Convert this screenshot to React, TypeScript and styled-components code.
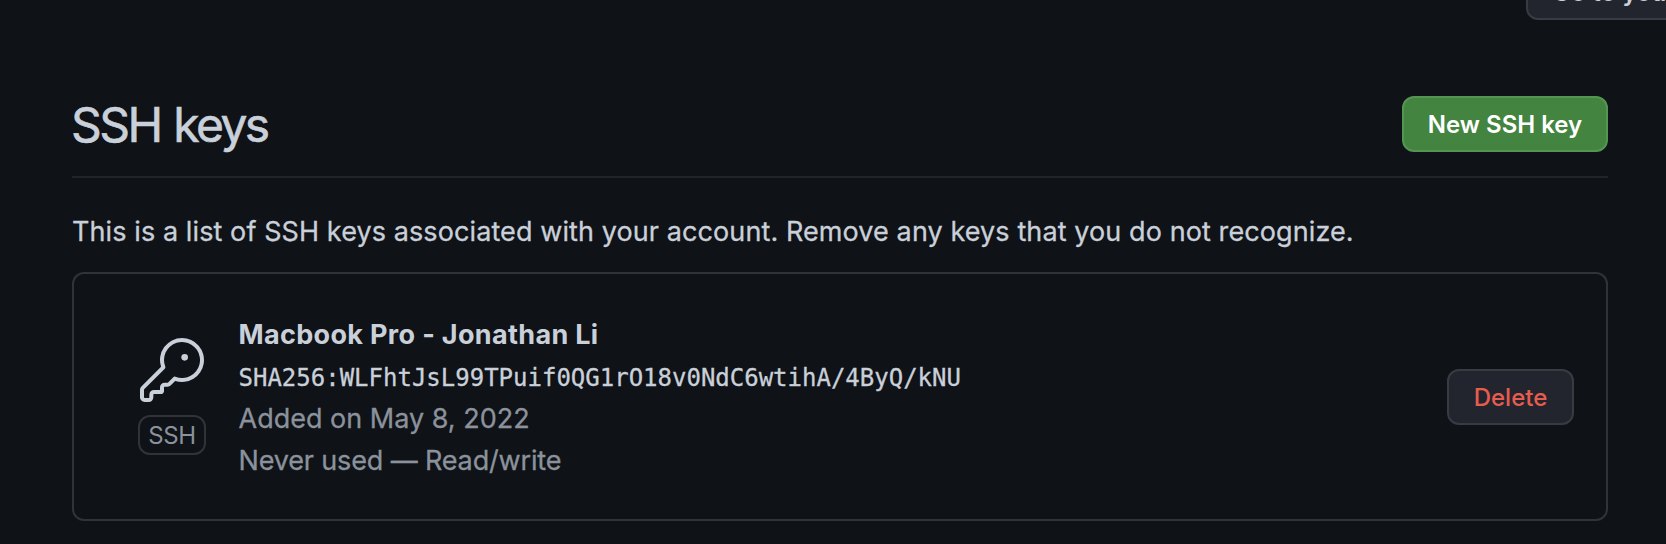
import styled, { createGlobalStyle } from 'styled-components';

const Global = createGlobalStyle`
  *, *::before, *::after { box-sizing: border-box; }
  html, body { margin: 0; background: #0f1217; overflow: hidden; }
`;

const Page = styled.main`
  height: 544px;
  overflow: hidden;
  padding: 0 58px 0 72px;
  background: #0f1217;
  color: #c9d0d9;
  font-family: Inter, 'Noto Sans', sans-serif;
  font-size: 27px;
  font-weight: 400;
  line-height: 42px;
`;

const TopBar = styled.div`
  display: flex;
  margin-top: -36px;
  padding-left: 1454px;
  margin-bottom: 76px;
`;

const Button = styled.button<{ $variant?: 'primary' | 'danger'; $width: number; $spacing?: number }>`
  flex: none;
  width: ${(p) => p.$width}px;
  height: 56px;
  padding: 2px 0 0;
  border: 2px solid ${(p) => (p.$variant === 'primary' ? '#559552' : '#383b42')};
  border-radius: 12px;
  background: ${(p) => (p.$variant === 'primary' ? '#438440' : '#22252d')};
  color: ${(p) => (p.$variant === 'primary' ? '#ffffff' : p.$variant === 'danger' ? '#e85c50' : '#c9d0d9')};
  font-family: inherit;
  font-size: 24px;
  font-weight: ${(p) => (p.$variant === 'danger' ? 500 : 600)};
  line-height: 40px;
  letter-spacing: ${(p) => p.$spacing ?? 0}px;
  white-space: nowrap;
`;

const Subhead = styled.header`
  display: flex;
  align-items: flex-start;
  justify-content: space-between;
  height: 82px;
  border-bottom: 2px solid #212428;
`;

const Title = styled.h2`
  margin: 0 0 0 -1px;
  font-size: 48px;
  font-weight: 400;
  line-height: 58px;
  letter-spacing: -2.6px;
  word-spacing: 2px;
  -webkit-text-stroke: 0.6px currentColor;
`;

const Description = styled.p`
  margin: 33px 0 19px;
  letter-spacing: 0.095px;
  white-space: nowrap;
  -webkit-text-stroke: 0.3px currentColor;
`;

const Card = styled.section`
  display: flex;
  align-items: center;
  height: 249px;
  padding: 0 32px 0 64px;
  border: 2px solid #303338;
  border-radius: 12px;
`;

const KeyBadge = styled.div`
  display: flex;
  flex-direction: column;
  align-items: center;
  width: 68px;
  margin-right: 32.5px;
`;

const Label = styled.span`
  width: 68px;
  height: 40px;
  margin-top: 13px;
  border: 2px solid #303338;
  border-radius: 12px;
  color: #8b929c;
  font-size: 24px;
  line-height: 38px;
  letter-spacing: -0.4px;
  text-align: center;
`;

const Details = styled.div`
  flex: 1;
  padding-top: 2px;
`;

const KeyName = styled.strong`
  display: block;
  font-weight: 700;
  letter-spacing: 0.33px;
`;

const Fingerprint = styled.code`
  display: block;
  padding-top: 1px;
  margin-bottom: -1px;
  font-family: 'DejaVu Sans Mono', monospace;
  font-size: 24px;
  -webkit-text-stroke: 0.3px currentColor;
`;

const Meta = styled.span<{ $spacing?: number }>`
  display: block;
  color: #8b929c;
  letter-spacing: ${(p) => p.$spacing ?? 0}px;
  -webkit-text-stroke: 0.3px currentColor;
`;

const KeyIcon = () => (
  <svg width="64" height="64" viewBox="0 0 24 24" fill="#c9d0d9" aria-hidden="true">
    <path d="M16.75 8.5a1.25 1.25 0 100-2.5 1.25 1.25 0 000 2.5z" />
    <path
      fillRule="evenodd"
      d="M15.75 0a8.25 8.25 0 00-7.851 10.79L.513 18.178A1.75 1.75 0 000 19.414v2.836C0 23.217.784 24 1.75 24h1.5A1.75 1.75 0 005 22.25v-1a.25.25 0 01.25-.25h2.735a.75.75 0 00.545-.22l.214-.213A.875.875 0 009 19.948V18.5a.25.25 0 01.25-.25h1.086c.464 0 .91-.184 1.237-.513l1.636-1.636A8.25 8.25 0 1015.75 0zM9 8.25a6.75 6.75 0 114.288 6.287.75.75 0 00-.804.168l-1.971 1.972a.25.25 0 01-.177.073H9.25A1.75 1.75 0 007.5 18.5v1H5.25a1.75 1.75 0 00-1.75 1.75v1a.25.25 0 01-.25.25h-1.5a.25.25 0 01-.25-.25v-2.836a.25.25 0 01.073-.177l7.722-7.721a.75.75 0 00.168-.804A6.73 6.73 0 019 8.25z"
    />
  </svg>
);

export default function App() {
  return (
    <Page>
      <Global />
      <TopBar>
        <Button $width={372} $spacing={0.4}>Go to your personal profile</Button>
      </TopBar>
      <Subhead>
        <Title>SSH keys</Title>
        <Button $variant="primary" $width={206}>New SSH key</Button>
      </Subhead>
      <Description>
        This is a list of SSH keys associated with your account. Remove any keys that you do not recognize.
      </Description>
      <Card>
        <KeyBadge>
          <KeyIcon />
          <Label>SSH</Label>
        </KeyBadge>
        <Details>
          <KeyName>Macbook Pro - Jonathan Li</KeyName>
          <Fingerprint>SHA256:WLFhtJsL99TPuif0QG1rO18v0NdC6wtihA/4ByQ/kNU</Fingerprint>
          <Meta>Added on May 8, 2022</Meta>
          <Meta $spacing={-0.15}>Never used — Read/write</Meta>
        </Details>
        <Button $variant="danger" $width={127}>Delete</Button>
      </Card>
    </Page>
  );
}
